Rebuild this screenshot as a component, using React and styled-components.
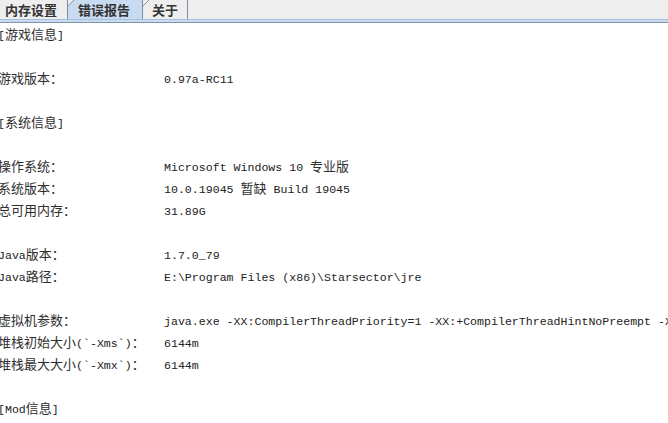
import styled, { createGlobalStyle } from 'styled-components';

const GlobalStyle = createGlobalStyle`
  html, body {
    margin: 0;
    padding: 0;
    background: #ffffff;
  }
  body {
    width: 668px;
    height: 423px;
    overflow: hidden;
  }
`

const Window = styled.div`
  width: 668px;
  height: 423px;
  overflow: hidden;
  background: #ffffff;
`
const TabBar = styled.div`
  display: flex;
  height: 19px;
  background: #eeeeee;
`
const Tab = styled.div`
  position: relative;
  box-sizing: border-box;
  width: ${p => p.$w}px;
  padding-left: ${p => p.$pl}px;
  display: flex;
  align-items: center;
  font-family: "Noto Sans CJK SC", sans-serif;
  font-weight: bold;
  font-size: 13px;
  color: #333333;
  background: ${p => (p.$active ? '#c8dbf0' : '#eeeeee')};
  border-right: 1px solid #7d8b99;

  ${p => p.$notch && `
    &::before {
      content: "";
      position: absolute;
      top: 0;
      left: 0;
      width: 6px;
      height: 6px;
      background: linear-gradient(to bottom right, #eeeeee 0 42%, #8a99a8 42% 58%, transparent 58%);
    }
  `}
`
const Band = styled.div`
  height: 2px;
  background: #c8dbf0;
  border-top: 1px solid #a9c0da;
  border-bottom: 1px solid #7f93a9;
`
const Content = styled.div`
  margin-left: -2px;
`
const Line = styled.div`
  display: grid;
  grid-template-columns: 166px 1fr;
  height: 22px;
  line-height: 22px;
  white-space: nowrap;
  color: #2e2e2e;
`
const Han = styled.span`
  font-family: "Noto Sans CJK SC", sans-serif;
  font-size: 13px;
`
const Latin = styled.span`
  font-family: "Liberation Mono", monospace;
  font-size: 11.6px;
  color: #222222;
`

const CJK = /[\u3000-\u9fff\uff00-\uffef]/

const Mixed = ({ text }) =>
  text
    .split(/([\u3000-\u9fff\uff00-\uffef]+)/)
    .filter(Boolean)
    .map((s, i) => (CJK.test(s) ? <Han key={i}>{s}</Han> : <Latin key={i}>{s}</Latin>))

const rows = [
  ['[游戏信息]'],
  [],
  ['游戏版本：', '0.97a-RC11'],
  [],
  ['[系统信息]'],
  [],
  ['操作系统：', 'Microsoft Windows 10 专业版'],
  ['系统版本：', '10.0.19045 暂缺 Build 19045'],
  ['总可用内存：', '31.89G'],
  [],
  ['Java版本：', '1.7.0_79'],
  ['Java路径：', 'E:\\Program Files (x86)\\Starsector\\jre'],
  [],
  ['虚拟机参数：', 'java.exe -XX:CompilerThreadPriority=1 -XX:+CompilerThreadHintNoPreempt -XX:+DisableExplicitGC'],
  ['堆栈初始大小(`-Xms`)：', '6144m'],
  ['堆栈最大大小(`-Xmx`)：', '6144m'],
  [],
  ['[Mod信息]'],
]

export default function App() {
  return (
    <Window>
      <GlobalStyle />
      <TabBar>
        <Tab $w={68} $pl={5}>内存设置</Tab>
        <Tab $w={75} $pl={10} $active $notch>错误报告</Tab>
        <Tab $w={45} $pl={9} $notch>关于</Tab>
      </TabBar>
      <Band />
      <Content>
        {rows.map(([label, value], i) => (
          <Line key={i}>
            <span>{label && <Mixed text={label} />}</span>
            <span>{value && <Mixed text={value} />}</span>
          </Line>
        ))}
      </Content>
    </Window>
  );
}
